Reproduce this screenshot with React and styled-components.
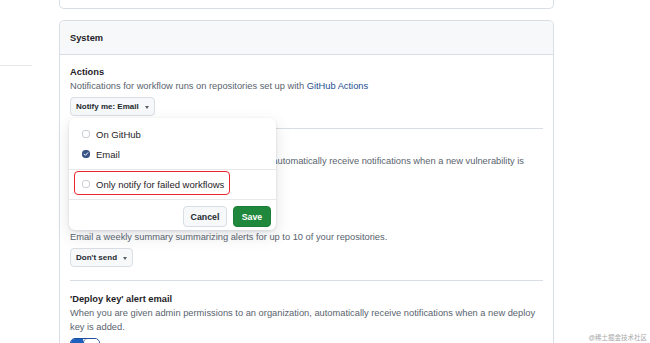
import React from "react";
import styled, { createGlobalStyle } from "styled-components";

const Global = createGlobalStyle`
  html, body { margin: 0; padding: 0; background: #fff; }
  body { font-family: "Liberation Sans", Arial, sans-serif; color: #1f2328; overflow: hidden; }
  #root { width: 650px; height: 343px; overflow: hidden; }
`;

const Page = styled.div`
  position: relative;
  display: flex;
  align-items: flex-start;
  width: 650px;
  height: 343px;
  overflow: hidden;
`;

const Sidebar = styled.div`
  width: 59px;
  flex: none;
  padding-top: 65px;
  box-sizing: border-box;
`;

const SideRule = styled.div`
  width: 32px;
  height: 1px;
  background: #e6e8eb;
`;

const Main = styled.div`
  width: 495px;
  flex: none;
  display: flex;
  flex-direction: column;
`;

const TopCard = styled.div`
  flex: none;
  height: 9px;
  box-sizing: border-box;
  border: 1px solid #d8dee4;
  border-top: none;
  border-radius: 0 0 5px 5px;
  margin-bottom: 11px;
`;

const Card = styled.div`
  flex: none;
  border: 1px solid #d8dee4;
  border-radius: 5px;
  min-height: 340px;
`;

const CardHeader = styled.div`
  height: 33px;
  display: flex;
  align-items: center;
  padding: 0 10px;
  background: #f6f8fa;
  border-bottom: 1px solid #d8dee4;
  border-radius: 5px 5px 0 0;
  font-size: 9.3px;
  font-weight: 700;
`;

const CardBody = styled.div`
  padding: 0 10px;
`;

const Item = styled.div`
  padding: ${(p) => (p.$first ? "10px" : "11px")} 0 ${(p) => p.$pb || 12}px;
  border-bottom: ${(p) => (p.$last ? "none" : "1px solid #d8dee4")};
`;

const Title = styled.div`
  font-size: 9.3px;
  line-height: 14px;
  font-weight: 700;
  color: #1f2328;
  margin-top: ${(p) => p.$mt || 0}px;
`;

const Desc = styled.div`
  font-size: 9.3px;
  line-height: 14px;
  color: #59636e;
`;

const Link = styled.span`
  color: #1d4f91;
`;

const SelectWrap = styled.div`
  position: relative;
  display: inline-block;
  margin-top: 4px;
`;

const SelectButton = styled.button`
  display: flex;
  align-items: center;
  gap: 4px;
  height: 19px;
  padding: 0 5px;
  box-sizing: border-box;
  background: #f6f8fa;
  border: 1px solid #d8dee4;
  border-radius: 4px;
  font-family: inherit;
  font-size: 8px;
  font-weight: 700;
  color: #24292f;
`;

const Caret = styled.span`
  width: 0;
  height: 0;
  border-left: 2.5px solid transparent;
  border-right: 2.5px solid transparent;
  border-top: 3px solid #57606a;
  margin-left: 2px;
  margin-top: 1px;
`;

const Popup = styled.div`
  position: absolute;
  top: calc(100% + 2px);
  left: -1px;
  width: 207px;
  box-sizing: border-box;
  background: #fff;
  border-radius: 6px;
  box-shadow: 0 1px 3px rgba(31, 35, 40, 0.12), 0 6px 16px rgba(66, 74, 83, 0.14);
  padding-top: 6px;
  z-index: 5;
`;

const Option = styled.label`
  display: flex;
  align-items: center;
  gap: 6px;
  height: 20px;
  padding-left: 13px;
  font-size: 9.5px;
  color: #1f2328;
`;

const OptionGroup = styled.div`
  padding-bottom: 5px;
  border-bottom: 1px solid #e6e8eb;
`;

const Highlight = styled.div`
  margin: 1px 46px 4px 5px;
  height: 24px;
  box-sizing: border-box;
  border: 1.5px solid #e8262b;
  border-radius: 4px;
  display: flex;
  align-items: center;
  gap: 6px;
  padding-left: 7px;
  padding-top: 2px;
  font-size: 9.5px;
  color: #1f2328;
`;

const Box = styled.span`
  width: 8px;
  height: 8px;
  box-sizing: border-box;
  border-radius: 3px;
  border: 1px solid ${(p) => (p.$checked ? "#3a5487" : "#c9ced4")};
  background: ${(p) => (p.$checked ? "#3a5487" : "#fff")};
  display: inline-flex;
  align-items: center;
  justify-content: center;
  flex: none;
`;

const Footer = styled.div`
  display: flex;
  justify-content: flex-end;
  gap: 6px;
  padding: 6px 5px 3px;
  border-top: 1px solid #e6e8eb;
`;

const ActionButton = styled.button`
  height: 21px;
  padding: 0;
  width: ${(p) => p.$w}px;
  box-sizing: border-box;
  border-radius: 4px;
  font-family: inherit;
  font-size: 8.8px;
  font-weight: 700;
  border: 1px solid ${(p) => (p.$primary ? "#1a7f37" : "#d8dee4")};
  background: ${(p) => (p.$primary ? "#1f883d" : "#f6f8fa")};
  color: ${(p) => (p.$primary ? "#fff" : "#24292f")};
`;

const ToggleRow = styled.div`
  display: flex;
  align-items: center;
  gap: 6px;
  margin-top: 4px;
  font-size: 9.3px;
  color: #1f2328;
`;

const Toggle = styled.span`
  display: flex;
  width: 30px;
  height: 16px;
  box-sizing: border-box;
  border: 1px solid #1b4f9c;
  border-radius: 5px;
  overflow: hidden;
`;

const ToggleOn = styled.span`
  flex: 1;
  background: #1b5fc0;
  display: flex;
  align-items: center;
  justify-content: center;
  &::after {
    content: "";
    width: 1px;
    height: 6px;
    background: #fff;
  }
`;

const ToggleKnob = styled.span`
  width: 15px;
  background: #fff;
  border-radius: 4px;
  border-left: 1px solid #1b4f9c;
`;

const Watermark = styled.div`
  position: absolute;
  right: 3px;
  bottom: 1px;
  font-size: 6.5px;
  color: #a8a8a8;
  font-family: "Liberation Sans", "Noto Sans CJK SC", sans-serif;
`;

const Check = () => (
  <svg width="6" height="6" viewBox="0 0 12 12">
    <path d="M2.5 6.2l2.4 2.4 4.6-5" fill="none" stroke="#fff" strokeWidth="2" strokeLinecap="round" strokeLinejoin="round" />
  </svg>
);

export default function App() {
  return (
    <>
      <Global />
      <Page>
        <Sidebar>
          <SideRule />
        </Sidebar>
        <Main>
          <TopCard />
          <Card>
            <CardHeader>System</CardHeader>
            <CardBody>
              <Item $first>
                <Title>Actions</Title>
                <Desc>
                  Notifications for workflow runs on repositories set up with <Link>GitHub Actions</Link>
                </Desc>
                <SelectWrap>
                  <SelectButton>
                    Notify me: Email <Caret />
                  </SelectButton>
                  <Popup>
                    <OptionGroup>
                      <Option>
                        <Box /> On GitHub
                      </Option>
                      <Option>
                        <Box $checked>
                          <Check />
                        </Box>{" "}
                        Email
                      </Option>
                    </OptionGroup>
                    <Highlight>
                      <Box /> Only notify for failed workflows
                    </Highlight>
                    <Footer>
                      <ActionButton $w={44}>Cancel</ActionButton>
                      <ActionButton $w={38} $primary>
                        Save
                      </ActionButton>
                    </Footer>
                  </Popup>
                </SelectWrap>
              </Item>
              <Item $pb={13}>
                <Title>Dependabot alerts: New vulnerabilities</Title>
                <Desc>
                  When you're given access to Dependabot alerts, automatically receive notifications when a new vulnerability is
                  found in one of your dependencies.
                </Desc>
                <SelectWrap>
                  <SelectButton>
                    Notify me: Email <Caret />
                  </SelectButton>
                </SelectWrap>
                <Title $mt={11}>Dependabot alerts: Email digest</Title>
                <Desc>Email a weekly summary summarizing alerts for up to 10 of your repositories.</Desc>
                <SelectWrap>
                  <SelectButton>
                    Don't send <Caret />
                  </SelectButton>
                </SelectWrap>
              </Item>
              <Item $last>
                <Title>'Deploy key' alert email</Title>
                <Desc>
                  When you are given admin permissions to an organization, automatically receive notifications when a new deploy
                  key is added.
                </Desc>
                <ToggleRow>
                  <Toggle>
                    <ToggleOn />
                    <ToggleKnob />
                  </Toggle>
                  On
                </ToggleRow>
              </Item>
            </CardBody>
          </Card>
        </Main>
        <Watermark>@稀土掘金技术社区</Watermark>
      </Page>
    </>
  );
}
